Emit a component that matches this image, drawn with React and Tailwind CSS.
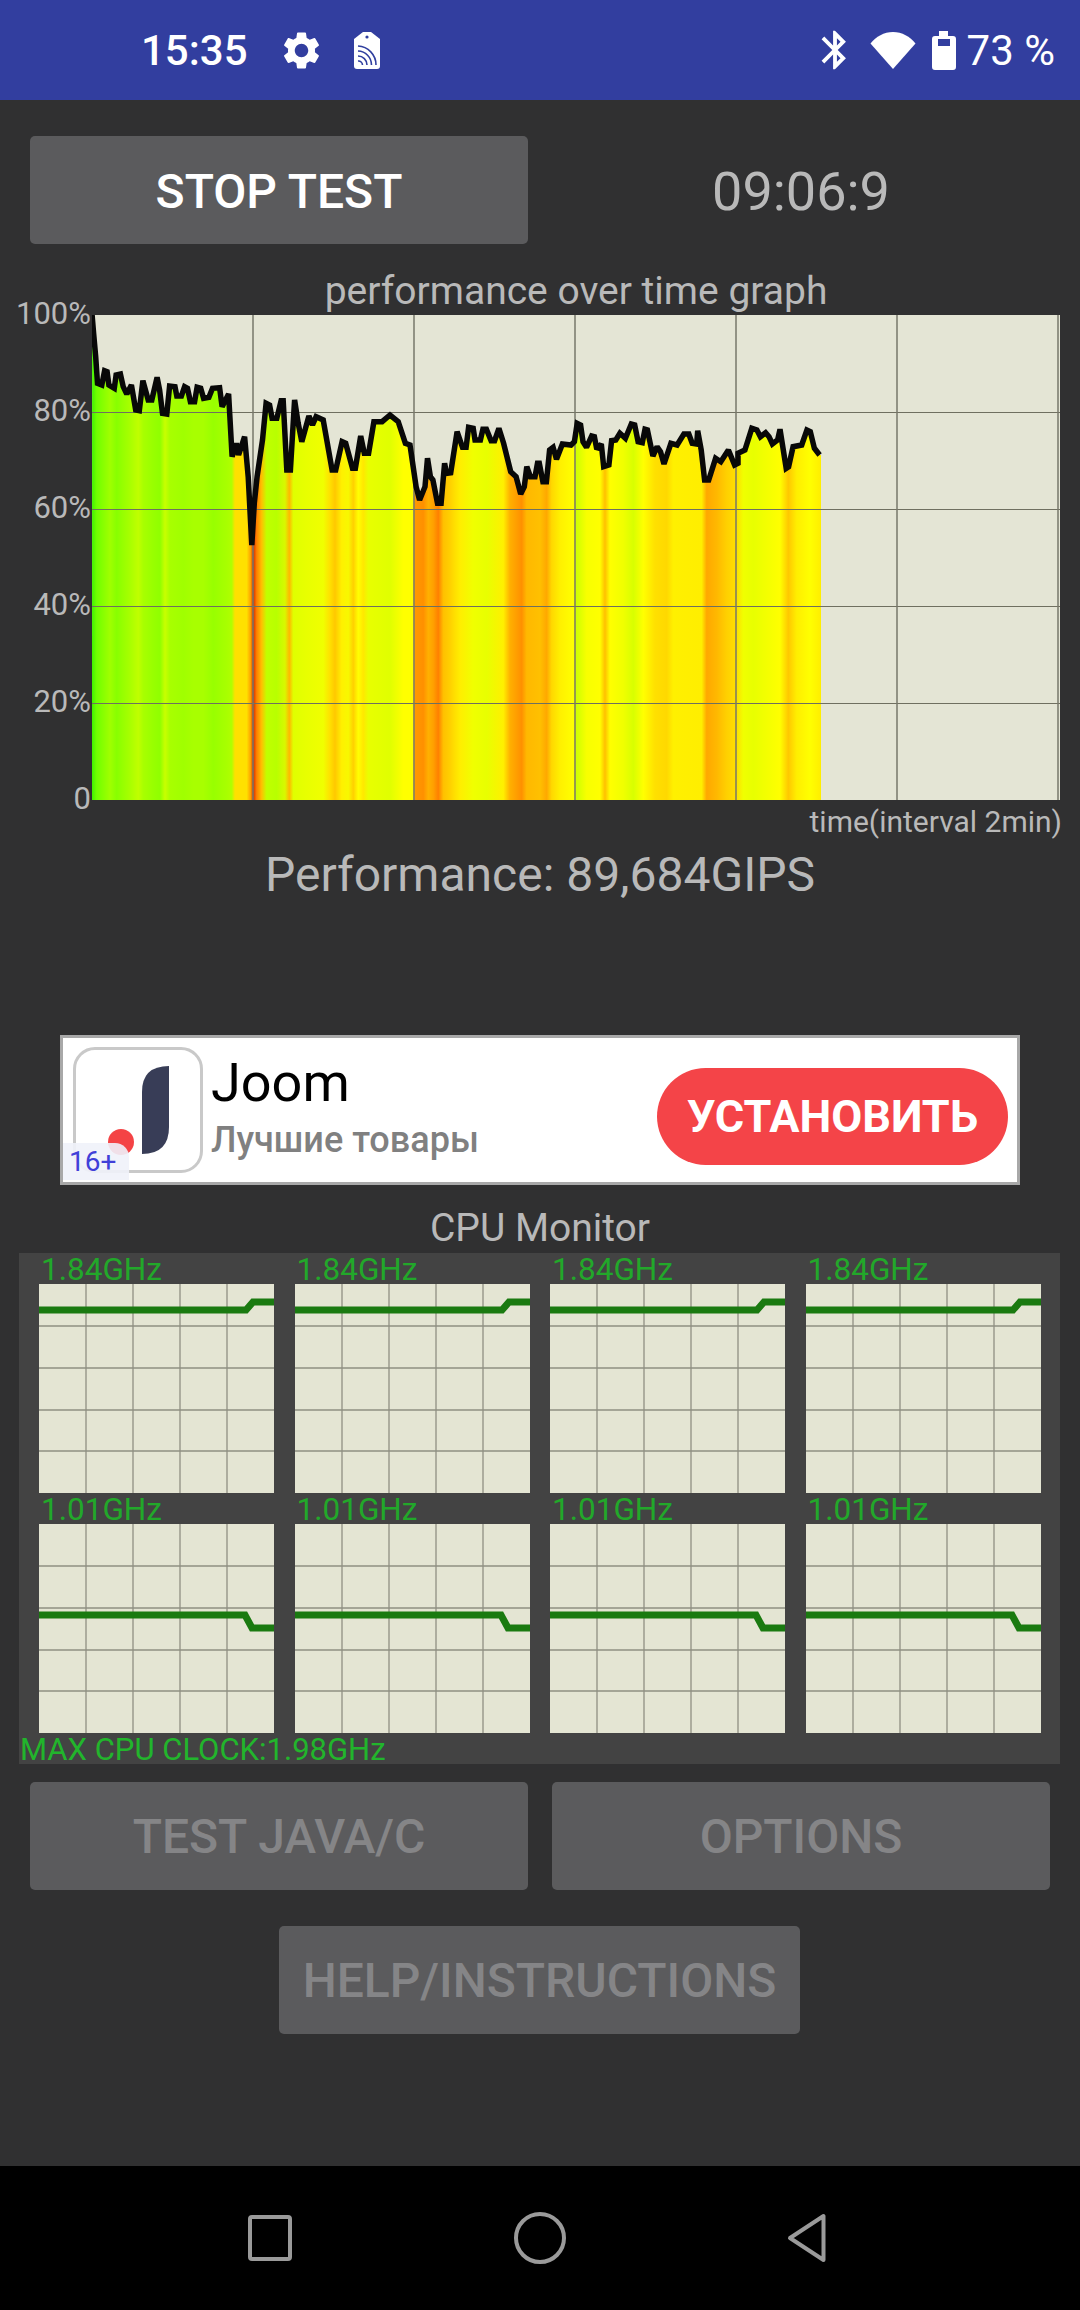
import React from 'react'
import { MdSettings, MdBluetooth } from 'react-icons/md'

// curve read off the graph, first list in 2.8x crop coords, second in 2.904x crop coords
const curveA = [[258,75],[262,130],[268,200],[273,280],[285,285],[293,242],[300,245],[305,285],[320,295],[325,255],[337,252],[345,290],[355,312],[368,285],[380,360],[390,362],[400,272],[415,330],[425,330],[440,262],[447,300],[455,370],[467,372],[475,288],[490,290],[495,318],[508,318],[517,290],[525,295],[533,335],[545,335],[552,292],[562,295],[570,325],[585,322],[595,295],[615,293],[622,350],[640,312],[650,500],[662,460],[668,495],[685,440],[695,560],[705,765],[712,640],[720,560],[735,450],[745,340],[755,345],[762,385],[775,385],[787,332],[793,332],[803,540],[813,540],[825,330],[835,400],[845,455],[865,378],[875,405],[885,380],[905,390],[930,540],[940,540],[958,455],[968,460],[987,535],[995,535],[1010,438],[1020,490],[1032,490],[1047,395],[1070,395],[1092,375],[1115,395],[1135,460],[1148,465],[1165,590],[1175,630],[1190,590],[1197,505],[1205,560],[1212,570],[1225,640],[1235,640],[1245,520],[1250,550],[1262,548],[1280,425],[1295,472],[1305,472],[1312,412],[1325,415],[1330,450],[1345,450],[1352,418],[1362,418],[1375,452],[1385,452],[1397,415],[1410,460],[1430,545],[1445,560],[1458,612],[1468,590],[1475,530],[1485,560],[1498,560],[1505,520],[1510,520],[1520,575],[1530,575]]
const curveB = [[28,480],[38,472],[48,508],[65,462],[90,465],[100,455],[108,400],[118,405],[125,455],[135,472],[150,438],[158,440],[165,478],[178,462],[185,530],[200,525],[208,452],[220,450],[232,430],[248,445],[265,402],[275,405],[285,455],[297,458],[305,418],[312,420],[328,498],[340,470],[350,485],[360,522],[380,460],[398,465],[418,432],[432,432],[442,460],[455,462],[458,422],[468,480],[478,570],[490,570],[510,505],[525,515],[547,480],[565,525],[575,520],[575,490],[595,480],[615,415],[630,420],[640,440],[655,428],[665,440],[675,462],[690,450],[697,418],[715,535],[722,530],[735,470],[760,465],[775,420],[785,425],[797,475],[812,495]]

const curve = [
  ...curveA.map(([x, y]) => [x / 2.8 - 92, 290 + y / 3 - 315]),
  ...curveB.map(([x, y]) => [540 + x / 2.904 - 92, 290 + y / 3 - 315]),
]
const linePts = curve.map((p) => p.map((n) => n.toFixed(1)).join(',')).join(' ')
const areaPts = `0,485 ${linePts} 729,${curve[curve.length - 1][1].toFixed(1)} 729,485`

// heat colours by column
const heatA = [[5,'#40f000'],[20,'#70ff00'],[40,'#88ff00'],[60,'#a0ff00'],[80,'#88ff00'],[100,'#98ff00'],[120,'#a8ff00'],[145,'#c0ff00'],[160,'#a8ff00'],[190,'#98ff00'],[210,'#90ff00'],[225,'#c8ff00'],[240,'#a8ff00'],[280,'#a0ff00'],[310,'#a8ff00'],[340,'#a8ff00'],[370,'#98ff00'],[410,'#a8ff00'],[425,'#b0ff00'],[435,'#ffe000'],[470,'#ffe000'],[482,'#ffa000'],[490,'#d83000'],[500,'#ff8000'],[515,'#ffc000'],[530,'#c0ff00'],[560,'#b8ff00'],[585,'#d8f800'],[598,'#ffb800'],[610,'#e0ff00'],[650,'#e8ff00'],[700,'#f0ff00'],[720,'#ffe000'],[735,'#ffc800'],[755,'#fff000'],[775,'#f8f800'],[790,'#ffd000'],[805,'#ffff00'],[820,'#ffe800'],[835,'#e8ff00'],[900,'#e0ff00'],[940,'#ffff00'],[968,'#ffff00'],[975,'#ff9800'],[1000,'#ff9000'],[1015,'#ffb000'],[1030,'#ffa000'],[1045,'#ff8000'],[1060,'#ffc000'],[1080,'#ffd000'],[1095,'#ffe000']]
const heatB = [[0,'#ffee00'],[40,'#f0ff00'],[80,'#e8ff00'],[130,'#fff000'],[150,'#ffb000'],[185,'#ff9000'],[200,'#ffb800'],[240,'#ffc000'],[260,'#ffa800'],[275,'#ffd800'],[300,'#fff000'],[340,'#ffff00'],[350,'#d0ff00'],[380,'#f8ff00'],[420,'#ffff00'],[435,'#ffc000'],[450,'#ffff00'],[490,'#f0ff00'],[520,'#d8ff00'],[550,'#ffff00'],[585,'#ffe000'],[620,'#ffd800'],[640,'#fff000'],[725,'#ffee00'],[740,'#ffa800'],[770,'#ffb800'],[800,'#ffd000'],[830,'#ffe000'],[850,'#f0ff00'],[880,'#e8ff00'],[960,'#ffff00'],[985,'#ffc800'],[1010,'#ffee00'],[1050,'#ffff00'],[1083,'#ffee00']]
const heat = [
  ...heatA.map(([x, c]) => [(90 + x / 3 - 92) / 729, c]),
  ...heatB.map(([x, c]) => [(460 + x / 3 - 92) / 729, c]),
]

const PerfGraph = () => (
  <svg width="968" height="485" viewBox="0 0 968 485" className="block">
    <defs>
      <linearGradient id="heat" gradientUnits="userSpaceOnUse" x1="0" y1="0" x2="729" y2="0">
        {heat.map(([o, c], i) => (
          <stop key={i} offset={Math.max(o, 0)} stopColor={c} />
        ))}
      </linearGradient>
    </defs>
    <rect width="968" height="485" fill="#e4e5d5" />
    <polygon points={areaPts} fill="url(#heat)" />
    {[97, 194, 291, 388].map((y) => (
      <line key={y} x1="0" x2="968" y1={y + 0.5} y2={y + 0.5} stroke="#6f6f60" strokeWidth="1" />
    ))}
    {[161, 322, 483, 644, 805, 966].map((x) => (
      <line key={x} x1={x} x2={x} y1="0" y2="485" stroke="#77776a" strokeWidth="1.5" />
    ))}
    <polyline points={linePts} fill="none" stroke="#080808" strokeWidth="5.5" strokeLinejoin="miter" strokeMiterlimit="2" />
  </svg>
)

const CpuCell = ({ points }) => (
  <svg width="235" height="209" viewBox="0 0 235 209" className="block">
    <rect width="235" height="209" fill="#e4e5d3" />
    {[42, 84, 126, 167].map((y) => (
      <line key={y} x1="0" x2="235" y1={y} y2={y} stroke="#8f8f82" strokeWidth="1.3" />
    ))}
    {[47, 94, 141, 188].map((x) => (
      <line key={x} x1={x} x2={x} y1="0" y2="209" stroke="#8f8f82" strokeWidth="1.3" />
    ))}
    <polyline points={points} fill="none" stroke="#1a7a10" strokeWidth="7" />
  </svg>
)

const CpuRow = ({ label, points }) => (
  <div className="grid grid-cols-4 gap-x-[20.5px] w-[1001.5px]">
    {[0, 1, 2, 3].map((i) => (
      <div key={i}>
        <div className="h-[31px] pl-[2px] text-[31.5px] leading-[33px] text-[#22a82a]">{label}</div>
        <CpuCell points={points} />
      </div>
    ))}
  </div>
)

const GrayButton = ({ children, className = '' }) => (
  <button className={`h-[108px] pt-[2px] rounded-[5px] bg-[#5b5b5d] text-[48px] font-medium text-[#858587] ${className}`}>
    {children}
  </button>
)

const SimTag = () => (
  <svg width="26" height="37" viewBox="0 0 26 37">
    <path d="M9 0h8l9 7v27a3 3 0 0 1-3 3H3a3 3 0 0 1-3-3V7z" fill="#fff" />
    <circle cx="13" cy="5" r="1.6" fill="#303f9f" />
    <g fill="none" stroke="#303f9f" strokeWidth="1.6">
      <path d="M4 14a19 19 0 0 1 18 19" />
      <path d="M4 19a14 14 0 0 1 13.5 14" />
      <path d="M4 24a9 9 0 0 1 9 9" />
      <path d="M4 29a4 4 0 0 1 4.5 4" />
    </g>
  </svg>
)

const StatusBar = () => (
  <div className="h-[100px] shrink-0 bg-[#323e9f] flex items-center justify-between pl-[141px] pr-[25px] text-white">
    <div className="flex items-center">
      <span className="pt-[2px] text-[42px] font-medium leading-none">15:35</span>
      <MdSettings className="ml-[31px] w-[45px] h-[45px]" />
      <div className="ml-[30px]">
        <SimTag />
      </div>
    </div>
    <div className="flex items-center">
      <MdBluetooth className="w-[46px] h-[46px]" />
      <svg width="46" height="37" viewBox="0 0 46 37" className="ml-[12px]">
        <path d="M23 37 0.5 11.5C6 4.5 14 0 23 0s17 4.5 22.5 11.5z" fill="#fff" />
      </svg>
      <svg width="24" height="39" viewBox="0 0 24 39" className="ml-[16px]">
        <path d="M7 0h9v5h5a3 3 0 0 1 3 3v28a3 3 0 0 1-3 3H3a3 3 0 0 1-3-3V8a3 3 0 0 1 3-3h4z" fill="#fff" />
        <rect x="6" y="8" width="12" height="7" fill="#323e9f" />
      </svg>
      <span className="ml-[11px] pt-[2px] text-[42px] leading-none">73 %</span>
    </div>
  </div>
)

const AdBanner = () => (
  <div className="relative mt-[130px] mx-[60px] h-[150px] border-[3px] border-[#a8a8a8] bg-white flex items-center">
    <div className="ml-[10px] w-[130px] h-[126px] rounded-[22px] border-[3px] border-[#c9c9c9] shrink-0">
      <svg width="124" height="120" viewBox="0 0 124 120" className="block">
        <path d="M93 16V77Q93 104 66 104V42Q66 16 93 16Z" fill="#383d57" />
        <circle cx="45" cy="92" r="13" fill="#f44345" />
      </svg>
    </div>
    <div className="ml-[8px] w-[300px] -mt-[2px]">
      <div className="text-[54px] leading-[60px] text-black">Joom</div>
      <div className="mt-[2px] text-[36px] font-medium leading-[50px] text-[#808080]">Лучшие товары</div>
    </div>
    <button className="ml-auto mr-[9px] mt-[13px] w-[351px] h-[97px] rounded-full bg-[#f44448] text-white text-[45px] font-bold">
      УСТАНОВИТЬ
    </button>
    <div className="absolute left-0 bottom-[2px] w-[66px] h-[37px] rounded-tr-[14px] bg-[#f0f2fa]/90 pl-[6px] text-[28px] leading-[38px] text-[#4040d8]">
      16+
    </div>
  </div>
)

const NavBar = () => (
  <div className="h-[144px] shrink-0 bg-black flex items-center justify-between pl-[248px] pr-[254px]">
    <div className="w-[44px] h-[46px] rounded-[4px] border-[4px] border-[#9a9a9a]" />
    <div className="w-[52px] h-[52px] rounded-full border-[4px] border-[#9a9a9a]" />
    <svg width="39" height="50" viewBox="0 0 39 50">
      <path d="M36.5 3V47L3 25Z" fill="none" stroke="#9a9a9a" strokeWidth="4" strokeLinejoin="round" />
    </svg>
  </div>
)

const App = () => {
  return (
    <div className="w-[1080px] h-[2310px] flex flex-col bg-[#303031] font-['Roboto',sans-serif] text-[#b9b9b9] overflow-hidden">
      <StatusBar />
      <main className="flex-1">
        <div className="mt-[36px] px-[30px] grid grid-cols-2 gap-x-[24px] items-center">
          <button className="h-[108px] pt-[3px] rounded-[5px] bg-[#5b5b5d] text-white text-[48px] font-medium">STOP TEST</button>
          <div className="pt-[3px] text-center text-[54px] leading-none">09:06:9</div>
        </div>

        <div className="mt-[27px] ml-[92px] w-[968px] h-[40px] text-center text-[39px] leading-[40px]">
          performance over time graph
        </div>
        <div className="mt-[4px] flex">
          <div className="w-[91px] h-[485px] -mt-[16px] mr-[1px] flex flex-col items-end gap-y-[67px] text-[31px] leading-[30px]">
            <span>100%</span>
            <span>80%</span>
            <span>60%</span>
            <span>40%</span>
            <span>20%</span>
            <span>0</span>
          </div>
          <PerfGraph />
        </div>
        <div className="mt-[2px] mr-[18px] h-[40px] text-right text-[30px] leading-[40px]">time(interval 2min)</div>
        <div className="mt-[3px] h-[60px] text-center text-[48px] leading-[60px]">Performance: 89,684GIPS</div>

        <AdBanner />

        <div className="mt-[23px] h-[40px] text-center text-[39px] leading-[40px]">CPU Monitor</div>
        <div className="mt-[5px] ml-[19px] w-[1041px] h-[511px] bg-[#434343] pl-[20px]">
          <CpuRow label="1.84GHz" points="0,26 207,26 214,18 235,18" />
          <CpuRow label="1.01GHz" points="0,91 206,91 213,104 235,104" />
          <div className="-ml-[19px] h-[31px] text-[31px] leading-[33px] text-[#22b52c]">MAX CPU CLOCK:1.98GHz</div>
        </div>

        <div className="mt-[18px] px-[30px] grid grid-cols-2 gap-x-[24px]">
          <GrayButton>TEST JAVA/C</GrayButton>
          <GrayButton>OPTIONS</GrayButton>
        </div>
        <div className="mt-[36px] flex justify-center">
          <GrayButton className="w-[521px] mr-[1px]">HELP/INSTRUCTIONS</GrayButton>
        </div>
      </main>
      <NavBar />
    </div>
  )
}

export default App
